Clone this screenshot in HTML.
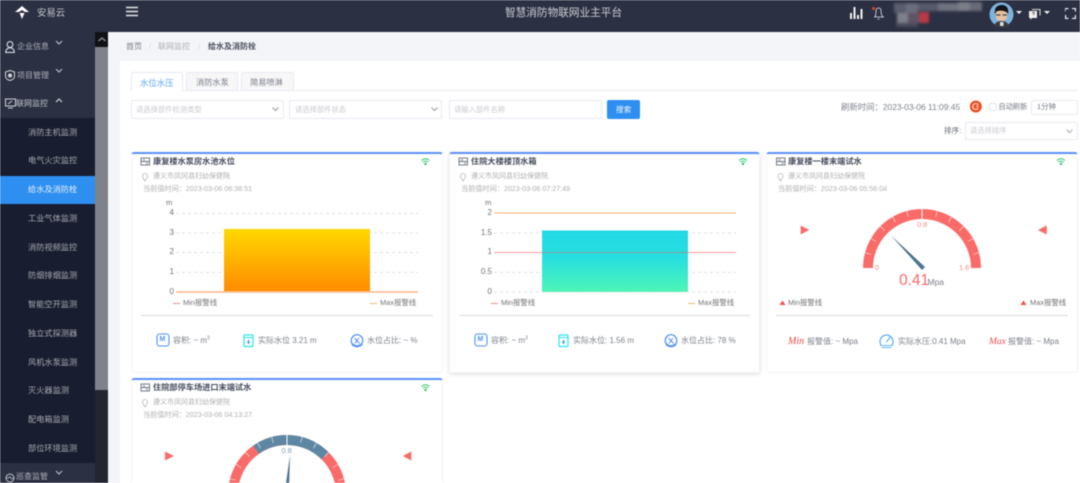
<!DOCTYPE html>
<html lang="zh">
<head>
<meta charset="utf-8">
<title>智慧消防物联网业主平台</title>
<style>
html,body{margin:0;padding:0;width:1080px;height:483px;overflow:hidden;background:#fff}
#r{position:relative;width:1080px;height:483px;overflow:hidden;background:#f4f5f8;font-family:"Liberation Sans","Noto Sans CJK SC",sans-serif;filter:blur(.5px)}
#r div,#r span.t,#r svg{position:absolute}
.t{position:absolute;white-space:nowrap;font-size:8px;line-height:12px;color:#6a6e77}
.side{color:#a9abb3;font-size:8.2px;left:28px}
.nav{color:#aeb0b8;font-size:8px}
.g{color:#b0b0b0;font-size:7px}
.d{color:#b0b0b0;font-size:7.15px}
.tt{color:#454b5c;font-size:8.2px;font-weight:bold}
.ph{color:#c8cacf;font-size:7.3px}
.b{background:#fff;border:1px solid #e8eaef;border-radius:2px;box-sizing:border-box}
.card{background:#fff;border:1px solid #f3f4f6;border-top:2px solid #5b8ff9;border-radius:3px;box-sizing:border-box}
.st{color:#7d818a;font-size:8px}
.ax{color:#707070;font-size:8px;text-align:right;width:24px}
.lg{color:#737373;font-size:7.4px}
</style>
</head>
<body>
<div id="r">
<!-- header -->
<div style="left:0;top:0;width:1080px;height:32px;background:#2b3043"></div>
<svg style="left:14px;top:5px" width="16" height="15" viewBox="0 0 16 15"><path d="M8 1 15 7H11L8 5 5 7H1Z M5.500 8H10.500L8 14Z" fill="#fff"/></svg>
<span class="t" style="left:37px;top:7px;color:#c4c6cc;font-size:9.4px">安易云</span>
<svg style="left:126px;top:6px" width="13" height="11"><path d="M0 1.500H12M0 5.500H12M0 9.500H12" stroke="#e6e7ea" stroke-width="1.400"/></svg>
<span class="t" style="left:505px;top:7px;color:#cfd1d6;font-size:10.650px">智慧消防物联网业主平台</span>
<svg style="left:850px;top:6px" width="13" height="14"><path d="M1 7V13M4.500 1V13M8 9V13M11.500 3V13" stroke="#f2f2f2" stroke-width="2"/></svg>
<svg style="left:871px;top:6px" width="15" height="15" viewBox="0 0 15 15"><path d="M4 11C5 9 5 7 5 5 5 3 6 2 7.500 2 9 2 10 3 10 5 10 7 10 9 12 11ZM3 11H13M6.500 13H8.500" fill="none" stroke="#e8e8e8" stroke-width=".8"/><circle cx="2.500" cy="2.500" r="1.500" fill="#e8402c"/></svg>
<!-- mosaic -->
<div style="left:0;top:0;width:1080px;height:32px;filter:blur(1.2px)">
<div style="left:894px;top:3px;width:12px;height:10px;background:#5b5e6e"></div>
<div style="left:906px;top:3px;width:12px;height:10px;background:#6a6d7b"></div>
<div style="left:918px;top:3px;width:20px;height:8px;background:#585b6b"></div>
<div style="left:938px;top:3px;width:20px;height:8px;background:#707380"></div>
<div style="left:958px;top:2px;width:12px;height:9px;background:#7b7e89"></div>
<div style="left:970px;top:2px;width:12px;height:9px;background:#686b79"></div>
<div style="left:897px;top:13px;width:11px;height:10px;background:#7d808c"></div>
<div style="left:908px;top:13px;width:11px;height:10px;background:#5d5566"></div>
<div style="left:919px;top:12px;width:10px;height:11px;background:#b83a46"></div>
<div style="left:896px;top:23px;width:22px;height:4px;background:#494c5d"></div>
</div>
<!-- avatar -->
<svg style="left:989px;top:2px" width="25" height="25" viewBox="0 0 25 25"><circle cx="12.500" cy="12.500" r="12" fill="#7db4de"/><path d="M6 12C5 5 9 3 13 3 18 3 20 7 19 12 17 9 15 8 12 8 9 8 8 10 6 12Z" fill="#15151a"/><ellipse cx="12.500" cy="13" rx="6" ry="6.500" fill="#e8c2a0"/><path d="M6 10C7 6 10 6 13 6 16 6 18 7 19 11 15 8 10 8 6 10Z" fill="#15151a"/><path d="M7 13H11.500M13.500 13H18" stroke="#444" stroke-width="1.200"/><path d="M5 25C6 20 9 19 12.500 19 16 19 19 20 20 25Z" fill="#3a3a40"/><path d="M11 20H14.500V24H11Z" fill="#ddd"/></svg>
<svg style="left:1016px;top:11px" width="6" height="4"><path d="M0 0H6L3 3Z" fill="#f2f2f2"/></svg>
<svg style="left:1029px;top:8px" width="12" height="12" viewBox="0 0 12 12"><path d="M0 3H8V10H3L1.500 12V10H0Z" fill="#f0f0f0"/><path d="M3 1.500H11V7.500" fill="none" stroke="#e0e0e0"/><path d="M3.200 5C3.600 4 5.300 4 5.300 5.200 5.300 6 4.200 6 4.200 7" fill="none" stroke="#333" stroke-width=".7"/></svg>
<svg style="left:1044px;top:11px" width="6" height="4"><path d="M0 0H6L3 3Z" fill="#f2f2f2"/></svg>
<svg style="left:1065px;top:8px" width="11" height="11"><path d="M0 3.500V0.500H3.500M7 .5H10.500V3.500M10.500 7V10.500H7M3.500 10.500H0.500V7" fill="none" stroke="#f4f4f4" stroke-width="1.300"/></svg>

<!-- sidebar -->
<div style="left:0;top:32px;width:95px;height:451px;background:#2b3043"></div>
<div style="left:0;top:118px;width:95px;height:345px;background:#181d2f"></div>
<div style="left:0;top:176px;width:95px;height:28px;background:#2e8ff0"></div>
<div style="left:95px;top:32px;width:13px;height:451px;background:#232630"></div>
<div style="left:95px;top:32px;width:13px;height:15px;background:#0f1117"></div>
<svg style="left:98px;top:37px" width="8" height="5"><path d="M.5 4 4 1 7.500 4" fill="none" stroke="#8a8c92" stroke-width="1.400"/></svg>
<div style="left:95px;top:47px;width:13px;height:343px;background:#7f818b"></div>
<svg style="left:5px;top:41px" width="10" height="12" viewBox="0 0 10 12"><circle cx="5" cy="3.500" r="2.900" fill="none" stroke="#d6d8dc" stroke-width="1.100"/><path d="M.6 11.400C1 8 3 6.800 5 6.800 7 6.800 9 8 9.400 11.400Z" fill="none" stroke="#d6d8dc" stroke-width="1.100"/></svg>
<span class="t nav" style="left:17px;top:41px">企业信息</span>
<svg style="left:55px;top:40px" width="8" height="5"><path d="M1 1 4 4 7 1" fill="none" stroke="#c4c6cc"/></svg>
<svg style="left:5px;top:70px" width="10" height="11" viewBox="0 0 10 11"><path d="M5 .5 9.500 2V6C9.500 8.500 7 10 5 10.500 3 10 .5 8.500 .5 6V2Z" fill="none" stroke="#d4d6da"/><circle cx="5" cy="5.500" r="2" fill="#d4d6da"/></svg>
<span class="t nav" style="left:17px;top:70px">项目管理</span>
<svg style="left:55px;top:68px" width="8" height="5"><path d="M1 1 4 4 7 1" fill="none" stroke="#c4c6cc"/></svg>
<svg style="left:5px;top:98px" width="11" height="11" viewBox="0 0 11 11"><rect x=".5" y="1" width="10" height="7" fill="none" stroke="#cfd1d6"/><path d="M3 10H8M3 6 7 3" stroke="#cfd1d6" fill="none"/></svg>
<span class="t nav" style="left:16px;top:98px;color:#c4c6cc">联网监控</span>
<svg style="left:55px;top:98px" width="8" height="5"><path d="M1 4 4 1 7 4" fill="none" stroke="#e0e0e0"/></svg>
<span class="t side" style="top:127px">消防主机监测</span>
<span class="t side" style="top:155px">电气火灾监控</span>
<span class="t side" style="top:184px;color:#e6eef8">给水及消防栓</span>
<span class="t side" style="top:213px">工业气体监测</span>
<span class="t side" style="top:242px">消防视频监控</span>
<span class="t side" style="top:270px">防烟排烟监测</span>
<span class="t side" style="top:299px">智能空开监测</span>
<span class="t side" style="top:328px">独立式探测器</span>
<span class="t side" style="top:357px">风机水泵监测</span>
<span class="t side" style="top:385px">灭火器监测</span>
<span class="t side" style="top:414px">配电箱监测</span>
<span class="t side" style="top:443px">部位环境监测</span>
<svg style="left:5px;top:473px" width="10" height="10"><circle cx="5" cy="5" r="4" fill="none" stroke="#c4c6cc"/><path d="M1 5H3.500L5 3.500 6.500 6 9 5" fill="none" stroke="#c4c6cc" stroke-width=".7"/></svg>
<span class="t nav" style="left:16px;top:471px">巡查监管</span>
<svg style="left:55px;top:470px" width="8" height="5"><path d="M1 1 4 4 7 1" fill="none" stroke="#c4c6cc"/></svg>

<!-- breadcrumb -->
<span class="t" style="left:126px;top:41px;color:#777b84">首页</span>
<span class="t" style="left:149px;top:41px;color:#d8dade">/</span>
<span class="t" style="left:158px;top:41px;color:#adb0b6">联网监控</span>
<span class="t" style="left:198px;top:41px;color:#d8dade">/</span>
<span class="t" style="left:208px;top:41px;color:#4a4f5c;font-weight:bold">给水及消防栓</span>

<!-- panel -->
<div style="left:120px;top:61px;width:960px;height:422px;background:#fff"></div>
<div style="left:131px;top:90px;width:947px;height:1px;background:#e8eaee"></div>
<div style="left:131px;top:72px;width:52px;height:19px;background:#fff;border:1px solid #e8eaef;border-bottom:0;border-radius:2px 2px 0 0;box-sizing:border-box"></div>
<div style="left:186px;top:72px;width:52px;height:19px;background:#f7f7f8;border:1px solid #e8eaef;border-radius:2px 2px 0 0;box-sizing:border-box"></div>
<div style="left:241px;top:72px;width:53px;height:19px;background:#f7f7f8;border:1px solid #e8eaef;border-radius:2px 2px 0 0;box-sizing:border-box"></div>
<span class="t" style="left:140px;top:77px;color:#5ba8f5;font-size:8.400px">水位水压</span>
<span class="t" style="left:196px;top:77px;color:#7a7e88;font-size:8.200px">消防水泵</span>
<span class="t" style="left:250px;top:77px;color:#7a7e88;font-size:8.200px">简易喷淋</span>

<!-- filters -->
<div class="b" style="left:131px;top:100px;width:153px;height:19px"></div>
<span class="t ph" style="left:136px;top:104px">请选择部件检测类型</span>
<svg style="left:272px;top:107px" width="7" height="5"><path d="M.5 .5 3.500 3.500 6.500 .5" fill="none" stroke="#999"/></svg>
<div class="b" style="left:289px;top:100px;width:153px;height:19px"></div>
<span class="t ph" style="left:295px;top:104px">请选择部件状态</span>
<svg style="left:431px;top:107px" width="7" height="5"><path d="M.5 .5 3.500 3.500 6.500 .5" fill="none" stroke="#999"/></svg>
<div class="b" style="left:449px;top:100px;width:153px;height:19px"></div>
<span class="t ph" style="left:454px;top:104px">请输入部件名称</span>
<div style="left:607px;top:100px;width:33px;height:19px;background:#2e8ff0;border-radius:2px"></div>
<span class="t" style="left:616px;top:104px;color:#f4f8fe;font-size:7.600px">搜索</span>
<span class="t" style="left:841px;top:101px;color:#7d818b;font-size:8.400px">刷新时间：2023-03-06 11:09:45</span>
<svg style="left:970px;top:100px" width="12" height="13"><circle cx="5.800" cy="6.500" r="6" fill="#ef4a1c"/><path d="M8.300 5A3 3 0 1 0 8.300 8M6.300 6.500H8.800" fill="none" stroke="#fff" stroke-width="1"/></svg>
<div class="b" style="left:989px;top:103px;width:8px;height:8px;border-color:#e2e4ea"></div>
<span class="t" style="left:998.500px;top:101px;color:#767a84;font-size:7.200px">自动刷新</span>
<div class="b" style="left:1031px;top:100px;width:47px;height:15px"></div>
<span class="t" style="left:1037px;top:101px;color:#72767f;font-size:7.400px">1分钟</span>
<span class="t" style="left:944px;top:125px;color:#686c76;font-size:7.600px">排序:</span>
<div class="b" style="left:965px;top:122px;width:113px;height:18px"></div>
<span class="t ph" style="left:970px;top:125px">请选择排序</span>
<svg style="left:1066px;top:129px" width="7" height="5"><path d="M.5 .5 3.500 3.500 6.500 .5" fill="none" stroke="#aaa"/></svg>

<!-- cards -->
<div class="card" style="left:131px;top:152px;width:312px;height:221px"></div>
<div class="card" style="left:449px;top:152px;width:311px;height:221px;box-shadow:0 1px 5px rgba(0,0,0,.14)"></div>
<div class="card" style="left:766px;top:152px;width:312px;height:221px"></div>
<div class="card" style="left:131px;top:378px;width:312px;height:120px"></div>

<!-- card graphics -->
<svg style="left:0;top:0" width="1080" height="483">
<g fill="none" stroke="#666c7a" stroke-width=".9">
<rect x="141" y="158" width="8.500" height="7"/><path d="M141 161.500H149.500M143 159.800H145M146 163.300H148"/>
<rect x="459" y="158" width="8.500" height="7"/><path d="M459 161.500H467.500M461 159.800H463M464 163.300H466"/>
<rect x="776.500" y="158" width="8.500" height="7"/><path d="M776.500 161.500H785M778.500 159.800H780.500M781.500 163.300H783.500"/>
<rect x="141" y="384" width="8.500" height="7"/><path d="M141 387.500H149.500M143 385.800H145M146 389.300H148"/>
</g>
<g fill="none" stroke="#2ac46b" stroke-width="1">
<path d="M421.500 160.500Q425.500 157 429.500 160.500M423 162.300Q425.500 160 428 162.300"/><circle cx="425.500" cy="164" r=".7" fill="#2ac46b"/>
<path d="M739 160.500Q743 157 747 160.500M740.500 162.300Q743 160 745.500 162.300"/><circle cx="743" cy="164" r=".7" fill="#2ac46b"/>
<path d="M1057 160.500Q1061 157 1065 160.500M1058.500 162.300Q1061 160 1063.500 162.300"/><circle cx="1061" cy="164" r=".7" fill="#2ac46b"/>
<path d="M421.500 386.500Q425.500 383 429.500 386.500M423 388.300Q425.500 386 428 388.300"/><circle cx="425.500" cy="390" r=".7" fill="#2ac46b"/>
</g>
<g fill="none" stroke="#b5b7bd" stroke-width=".8">
<path d="M145 181C143 178 142.500 177 142.500 176A2.500 2.500 0 0 1 147.500 176C147.500 177 147 178 145 181Z"/>
<path d="M463 181C461 178 460.500 177 460.500 176A2.500 2.500 0 0 1 465.500 176C465.500 177 465 178 463 181Z"/>
<path d="M780.500 181C778.500 178 778 177 778 176A2.500 2.500 0 0 1 783 176C783 177 782.500 178 780.500 181Z"/>
<path d="M145 407C143 404 142.500 403 142.500 402A2.500 2.500 0 0 1 147.500 402C147.500 403 147 404 145 407Z"/>
</g>

<defs>
<linearGradient id="o" x1="0" y1="0" x2="0" y2="1"><stop offset="0" stop-color="#ffd800"/><stop offset="1" stop-color="#ff8a00"/></linearGradient>
<linearGradient id="c" x1="0" y1="0" x2="0" y2="1"><stop offset="0" stop-color="#22d9e6"/><stop offset=".45" stop-color="#27dfdf"/><stop offset="1" stop-color="#4ef6b6"/></linearGradient>
</defs>
<g stroke="#d8d8d8" stroke-width=".8" stroke-dasharray="3 3">
<path d="M176 213.500H418M176 233H418M176 252.500H418M176 272.500H418"/>
<path d="M494 233H736M494 272.500H736"/>
</g>
<rect x="224" y="229" width="146" height="63" fill="url(#o)"/>
<path d="M176 292H418" stroke="#f9c097" stroke-width="1.800"/>
<rect x="542" y="230.500" width="146" height="61.500" fill="url(#c)"/>
<path d="M494 292H736" stroke="#d8d8d8" stroke-width=".8" stroke-dasharray="3 3"/>
<path d="M494 213H736" stroke="#f5b36b" stroke-width="1"/>
<path d="M494 252.500H542" stroke="#f79a9a" stroke-width="1"/><path d="M542 252.500H688" stroke="#8a9aa0" stroke-width="1"/><path d="M688 252.500H736" stroke="#f79a9a" stroke-width="1"/>
<path d="M173 303.500H180" stroke="#e88" stroke-width="1"/><path d="M370 303.500H377" stroke="#f5b36b" stroke-width="1"/>
<path d="M491 303.500H498" stroke="#e88" stroke-width="1"/><path d="M688 303.500H695" stroke="#f5b36b" stroke-width="1"/>
<path d="M141 315.500H433M459 315.500H750M776 315.500H1068" stroke="#c9cbcf" stroke-width=".8"/>

<!-- gauge 3 -->
<path d="M868 268A54 54 0 0 1 976 268" fill="none" stroke="#f96b68" stroke-width="10"/>
<g stroke="#fff" stroke-width=".7" opacity=".8">
<path d="M937.300 211 935.700 216.800M951.500 216.900 948.500 222.100M963.700 226.300 959.500 230.500M973.100 238.500 967.900 241.500M979 252.700 973.200 254.300M984 268M906.700 211 908.300 216.800M892.500 216.900 895.500 222.100M880.300 226.300 884.500 230.500M870.900 238.500 876.100 241.500M865 252.700 870.800 254.300"/>
</g>
<path d="M922 209V220" stroke="#fff" stroke-width="1"/>
<path d="M891 235.500 925 267 922 270Z" fill="#4d7590"/>
<path d="M800.700 225.500 809.200 230 800.700 234.500Z M1046.700 225.500 1038 230 1046.700 234.500Z" fill="#f96b68"/>
<path d="M782.500 300.500 785.500 305H779.500Z M1023.500 300.500 1026.500 305H1020.500Z" fill="#f0504e"/>

<!-- gauge 4 -->
<path d="M233 494A54 54 0 0 1 341 494" fill="none" stroke="#f96b68" stroke-width="10"/>
<path d="M256 449.800A54 54 0 0 1 325 455.800" fill="none" stroke="#5e87a3" stroke-width="10"/>
<g stroke="#fff" stroke-width=".7" opacity=".8">
<path d="M302.300 437 300.700 442.800M316.500 442.900 313.500 448.100M328.700 452.300 324.500 456.500M338.100 464.500 332.900 467.500M271.700 437 273.300 442.800M257.500 442.900 260.500 448.100M245.300 452.300 249.500 456.500M235.900 464.500 241.100 467.500M344 478.700 338.200 480.300M230 478.700 235.800 480.300"/>
</g>
<path d="M287 435V446" stroke="#fff" stroke-width="1"/>
<path d="M290 455 289 490 285 490Z" fill="#4d7590"/>
<path d="M165 451.500 174 456 165 460.500Z M411.300 451.500 402.700 456 411.300 460.500Z" fill="#f96b68"/>

<!-- stat icons -->
<g fill="none">
<rect x="157" y="334" width="12" height="12" rx="2.500" stroke="#4d94f5" stroke-width="1.100"/>
<rect x="475" y="334" width="12" height="12" rx="2.500" stroke="#4d94f5" stroke-width="1.100"/>
<rect x="244" y="335" width="9" height="11.500" rx="1" stroke="#2fe5ea" stroke-width="1.200"/><path d="M244 337.500H253" stroke="#2fe5ea"/>
<rect x="559" y="335" width="9" height="11.500" rx="1" stroke="#2fe5ea" stroke-width="1.200"/><path d="M559 337.500H568" stroke="#2fe5ea"/>
<path d="M248.500 339.500C247 341.500 247 343.500 248.500 344 250 343.500 250 341.500 248.500 339.500Z" fill="#39a7e6"/>
<path d="M563.500 339.500C562 341.500 562 343.500 563.500 344 565 343.500 565 341.500 563.500 339.500Z" fill="#39a7e6"/>
<circle cx="357" cy="340.500" r="5.800" stroke="#4d8ef5" stroke-width="1.200"/><path d="M354.500 338 359.500 343.500M359 338 355 343.500" stroke="#4d8ef5"/><path d="M352 344Q357 348.500 362 344" stroke="#4d8ef5" stroke-width="2"/>
<circle cx="671" cy="340.500" r="5.800" stroke="#4d8ef5" stroke-width="1.200"/><path d="M668.500 338 673.500 343.500M673 338 669 343.500" stroke="#4d8ef5"/><path d="M666 344Q671 348.500 676 344" stroke="#4d8ef5" stroke-width="2"/>
<path d="M881 345A6.500 6.500 0 1 1 892 345" stroke="#3aa3e8" stroke-width="1"/><path d="M886.500 342 890 337" stroke="#3aa3e8"/><path d="M880 345.500H893M881.500 347.500H891.500" stroke="#3aa3e8" stroke-width=".8"/>
</g>
</svg>

<!-- card text -->
<span class="t tt" style="left:153px;top:156px">康复楼水泵房水池水位</span>
<span class="t g" style="left:153px;top:171px">遵义市凤冈县妇幼保健院</span>
<span class="t d" style="left:143px;top:183px">当前值时间：2023-03-06 06:38:51</span>
<span class="t" style="left:166px;top:197px;font-size:7.600px;color:#707070">m</span>
<span class="t ax" style="left:150px;top:207px">4</span><span class="t ax" style="left:150px;top:227px">3</span><span class="t ax" style="left:150px;top:246px">2</span><span class="t ax" style="left:150px;top:266px">1</span><span class="t ax" style="left:150px;top:286px">0</span>
<span class="t lg" style="left:183px;top:297px">Min报警线</span>
<span class="t lg" style="left:380px;top:297px">Max报警线</span>
<span class="t st" style="left:173px;top:335px">容积: ~ m<sup style="font-size:5px;line-height:0">3</sup></span>
<span class="t st" style="left:258px;top:335px">实际水位 3.21 m</span>
<span class="t st" style="left:367px;top:335px">水位占比: ~ %</span>
<span style="position:absolute;left:159.500px;top:335px;font-size:7px;line-height:10px;font-weight:bold;color:#4d94f5">M</span>

<span class="t tt" style="left:471px;top:156px">住院大楼楼顶水箱</span>
<span class="t g" style="left:471px;top:171px">遵义市凤冈县妇幼保健院</span>
<span class="t d" style="left:461px;top:183px">当前值时间：2023-03-06 07:27:49</span>
<span class="t" style="left:485px;top:197px;font-size:7.600px;color:#707070">m</span>
<span class="t ax" style="left:468px;top:207px">2</span><span class="t ax" style="left:468px;top:227px">1.5</span><span class="t ax" style="left:468px;top:246px">1</span><span class="t ax" style="left:468px;top:266px">0.5</span><span class="t ax" style="left:468px;top:286px">0</span>
<span class="t lg" style="left:501px;top:297px">Min报警线</span>
<span class="t lg" style="left:698px;top:297px">Max报警线</span>
<span class="t st" style="left:491px;top:335px">容积: ~ m<sup style="font-size:5px;line-height:0">3</sup></span>
<span class="t st" style="left:573px;top:335px">实际水位: 1.56 m</span>
<span class="t st" style="left:681px;top:335px">水位占比: 78 %</span>
<span style="position:absolute;left:477.500px;top:335px;font-size:7px;line-height:10px;font-weight:bold;color:#4d94f5">M</span>

<span class="t tt" style="left:788px;top:156px">康复楼一楼末端试水</span>
<span class="t g" style="left:788px;top:171px">遵义市凤冈县妇幼保健院</span>
<span class="t d" style="left:778px;top:183px">当前值时间：2023-03-06 05:56:04</span>
<span class="t" style="left:917px;top:219px;color:#f98a88;font-size:7.400px">0.8</span>
<span class="t" style="left:875px;top:262px;color:#f98a88;font-size:7.400px">0</span>
<span class="t" style="left:959px;top:262px;color:#f98a88;font-size:7.400px">1.6</span>
<span class="t" style="left:899px;top:272px;color:#f96b68;font-size:15.500px;line-height:18px">0.41</span>
<span class="t" style="left:927.500px;top:276px;color:#7a7e88;font-size:8.500px">Mpa</span>
<span class="t lg" style="left:788px;top:297px">Min报警线</span>
<span class="t lg" style="left:1030px;top:297px">Max报警线</span>
<span class="t" style="left:788px;top:336px;color:#e84a47;font:italic 10px/12px 'Liberation Serif',serif">Min</span>
<span class="t st" style="left:807px;top:336px">报警值: ~ Mpa</span>
<span class="t st" style="left:898px;top:336px">实际水压:0.41 Mpa</span>
<span class="t" style="left:989px;top:336px;color:#e84a47;font:italic 9.500px/12px 'Liberation Serif',serif">Max</span>
<span class="t st" style="left:1008px;top:336px">报警值: ~ Mpa</span>

<span class="t tt" style="left:153px;top:382px">住院部停车场进口末端试水</span>
<span class="t g" style="left:153px;top:397px">遵义市凤冈县妇幼保健院</span>
<span class="t d" style="left:143px;top:409px">当前值时间：2023-03-06 04:13:27</span>
<span class="t" style="left:281.500px;top:445px;color:#7f9db3;font-size:7.400px">0.8</span>
</div>
</body>
</html>
